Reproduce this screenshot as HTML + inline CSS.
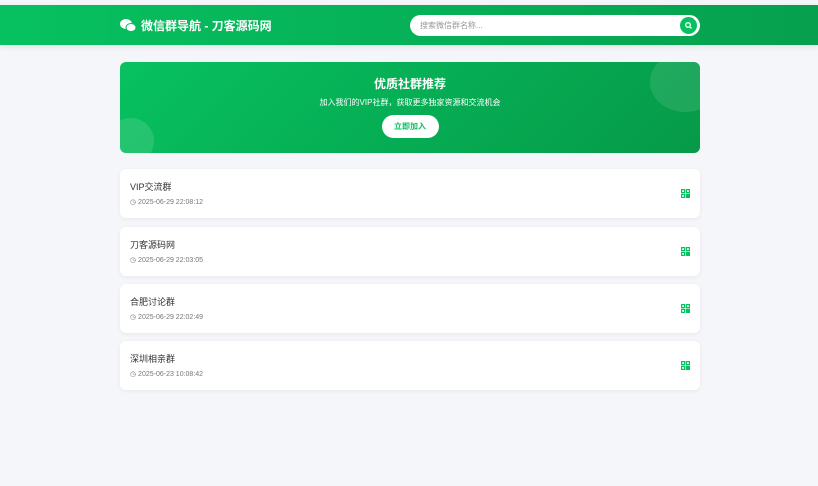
<!DOCTYPE html>
<html><head><meta charset="utf-8"><style>
*{margin:0;padding:0;box-sizing:border-box}
body{width:818px;height:486px;background:#f5f6fa;font-family:"Liberation Sans","Noto Sans CJK SC",sans-serif;overflow:hidden;position:relative}
.hdr{position:absolute;top:5px;left:0;width:818px;height:40px;background:linear-gradient(90deg,#07c160,#06a04e);box-shadow:0 2px 6px rgba(0,0,0,.08)}
.logo{position:absolute;left:120px;top:12px;color:#fff;font-size:12px;font-weight:bold;display:flex;align-items:center;gap:5px}
.search{position:absolute;left:410px;top:10px;width:290px;height:21px;background:#fff;border-radius:11px}
.search span{position:absolute;left:10px;top:5px;font-size:8px;color:#999}
.sbtn{position:absolute;right:3px;top:2px;width:17px;height:17px;border-radius:50%;background:#07c160}
.banner{position:absolute;left:120px;top:62px;width:580px;height:91px;border-radius:6px;background:linear-gradient(135deg,#07c160,#069a48);overflow:hidden;text-align:center;color:#fff}
.c1{position:absolute;right:-20px;top:-10px;width:70px;height:60px;border-radius:50%;background:rgba(255,255,255,.1)}
.c2{position:absolute;left:-12px;top:56px;width:46px;height:46px;border-radius:50%;background:rgba(255,255,255,.12)}
.banner h2{font-size:12px;margin-top:13px}
.banner p{font-size:8px;margin-top:5px}
.btn{display:inline-block;margin-top:7px;width:57px;height:23px;line-height:23px;border-radius:12px;background:#fff;color:#07c160;font-size:8px;font-weight:bold}
.card{position:absolute;left:120px;width:580px;height:49px;background:#fff;border-radius:6px;box-shadow:0 1px 4px rgba(0,0,0,.06)}
.card b{position:absolute;left:10px;top:11px;font-size:9px;font-weight:normal;color:#333}
.card i{position:absolute;left:10px;top:29px;font-size:7px;font-style:normal;color:#777}
.qr{position:absolute;right:10px;top:20px}
</style></head><body>
<div class="hdr">
<div class="logo"><svg width="16" height="13" viewBox="0 0 16 13"><ellipse cx="6" cy="5" rx="6" ry="5" fill="#fff"/><ellipse cx="11" cy="8.5" rx="5" ry="4" fill="#fff" stroke="#07c160" stroke-width="1"/></svg>微信群导航 - 刀客源码网</div>
<div class="search"><span>搜索微信群名称...</span><div class="sbtn"><svg width="17" height="17" viewBox="0 0 17 17"><circle cx="8" cy="8" r="2.3" fill="none" stroke="#fff" stroke-width="1.3"/><path d="M9.7 9.7L11.5 11.5" stroke="#fff" stroke-width="1.3"/></svg></div></div>
</div>
<div class="banner"><div class="c1"></div><div class="c2"></div>
<h2>优质社群推荐</h2><p>加入我们的VIP社群，获取更多独家资源和交流机会</p><div class="btn">立即加入</div></div>
<div class="card" style="top:169px"><b>VIP交流群</b><i>◷ 2025-06-29 22:08:12</i><svg class="qr" width="9" height="9" viewBox="0 0 9 9" fill="none" stroke="#07c160" stroke-width="1.2"><rect x=".6" y=".6" width="3" height="3"/><rect x="5.4" y=".6" width="3" height="3"/><rect x=".6" y="5.4" width="3" height="3"/><path d="M5.4 5.4h3v3h-3z" fill="#07c160"/></svg></div>
<div class="card" style="top:227px"><b>刀客源码网</b><i>◷ 2025-06-29 22:03:05</i><svg class="qr" width="9" height="9" viewBox="0 0 9 9" fill="none" stroke="#07c160" stroke-width="1.2"><rect x=".6" y=".6" width="3" height="3"/><rect x="5.4" y=".6" width="3" height="3"/><rect x=".6" y="5.4" width="3" height="3"/><path d="M5.4 5.4h3v3h-3z" fill="#07c160"/></svg></div>
<div class="card" style="top:284px"><b>合肥讨论群</b><i>◷ 2025-06-29 22:02:49</i><svg class="qr" width="9" height="9" viewBox="0 0 9 9" fill="none" stroke="#07c160" stroke-width="1.2"><rect x=".6" y=".6" width="3" height="3"/><rect x="5.4" y=".6" width="3" height="3"/><rect x=".6" y="5.4" width="3" height="3"/><path d="M5.4 5.4h3v3h-3z" fill="#07c160"/></svg></div>
<div class="card" style="top:341px"><b>深圳相亲群</b><i>◷ 2025-06-23 10:08:42</i><svg class="qr" width="9" height="9" viewBox="0 0 9 9" fill="none" stroke="#07c160" stroke-width="1.2"><rect x=".6" y=".6" width="3" height="3"/><rect x="5.4" y=".6" width="3" height="3"/><rect x=".6" y="5.4" width="3" height="3"/><path d="M5.4 5.4h3v3h-3z" fill="#07c160"/></svg></div>
</body></html>
